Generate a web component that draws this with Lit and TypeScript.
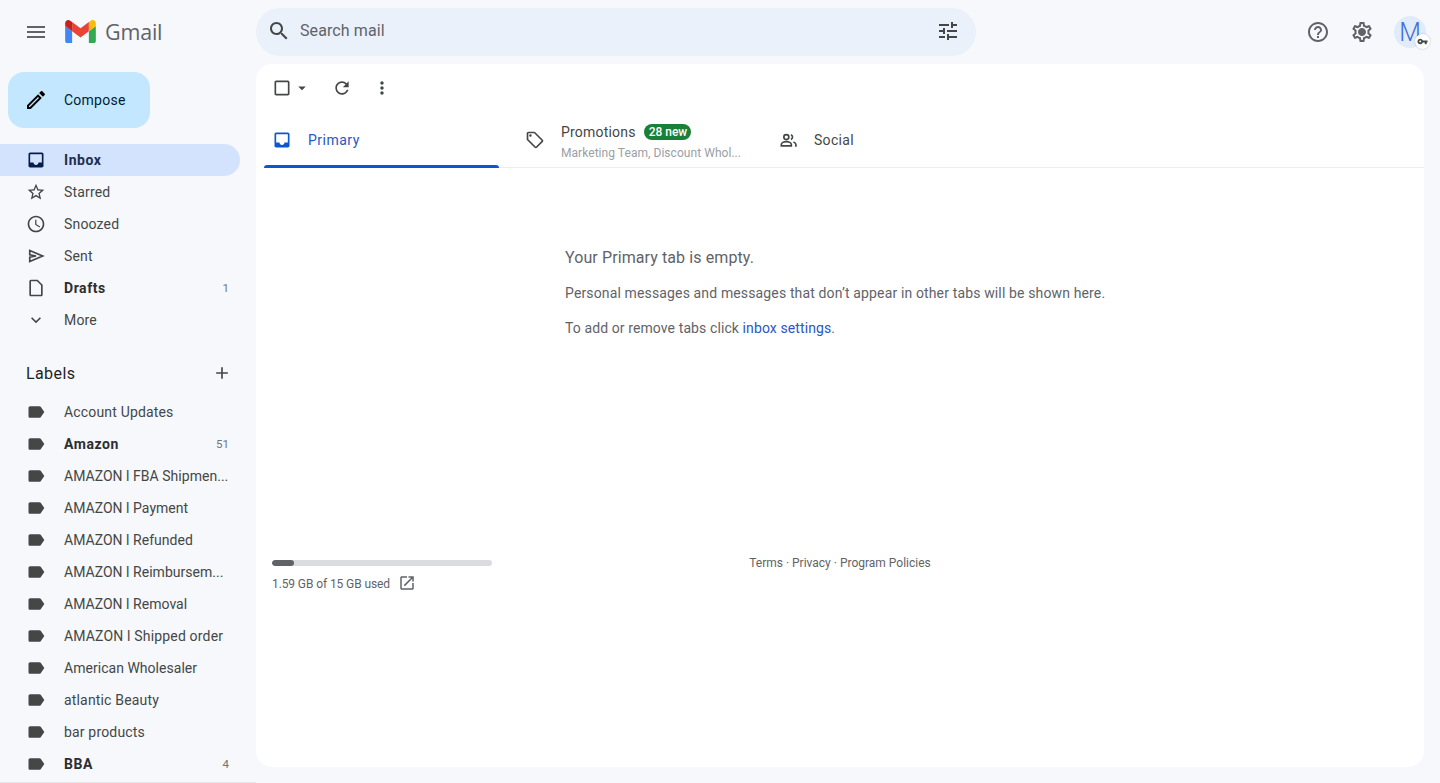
import { LitElement, html, css, svg } from "lit";
import { customElement } from "lit/decorators.js";

const P: Record<string, string> = {
  menu: "M3 18h18v-2H3v2zm0-5h18v-2H3v2zm0-7v2h18V6H3z",
  search: "M15.5 14h-.79l-.28-.27C15.41 12.59 16 11.11 16 9.5 16 5.91 13.09 3 9.5 3S3 5.91 3 9.5 5.91 16 9.5 16c1.61 0 3.09-.59 4.23-1.57l.27.28v.79l5 4.99L20.49 19l-4.99-5zm-6 0C7.01 14 5 11.99 5 9.5S7.01 5 9.5 5 14 7.01 14 9.5 11.99 14 9.5 14z",
  tune: "M3 17v2h6v-2H3zM3 5v2h10V5H3zm10 16v-2h8v-2h-8v-2h-2v6h2zM7 9v2H3v2h4v2h2V9H7zm14 4v-2H11v2h10zm-6-4h2V7h4V5h-4V3h-2v6z",
  help: "M11 18h2v-2h-2v2zm1-16C6.48 2 2 6.48 2 12s4.48 10 10 10 10-4.48 10-10S17.52 2 12 2zm0 18c-4.41 0-8-3.59-8-8s3.59-8 8-8 8 3.59 8 8-3.59 8-8 8zm0-14c-2.21 0-4 1.79-4 4h2c0-1.1.9-2 2-2s2 .9 2 2c0 2-3 1.75-3 5h2c0-2.25 3-2.5 3-5 0-2.21-1.79-4-4-4z",
  gear: "M19.43 12.98c.04-.32.07-.64.07-.98 0-.34-.03-.66-.07-.98l2.11-1.65c.19-.15.24-.42.12-.64l-2-3.46c-.09-.16-.26-.25-.44-.25-.06 0-.12.01-.17.03l-2.49 1c-.52-.4-1.08-.73-1.69-.98l-.38-2.65C14.46 2.18 14.25 2 14 2h-4c-.25 0-.46.18-.49.42l-.38 2.65c-.61.25-1.17.59-1.69.98l-2.49-1c-.06-.02-.12-.03-.18-.03-.17 0-.34.09-.43.25l-2 3.46c-.13.22-.07.49.12.64l2.11 1.65c-.04.32-.07.65-.07.98 0 .33.03.66.07.98l-2.11 1.65c-.19.15-.24.42-.12.64l2 3.46c.09.16.26.25.44.25.06 0 .12-.01.17-.03l2.49-1c.52.4 1.08.73 1.69.98l.38 2.65c.03.24.24.42.49.42h4c.25 0 .46-.18.49-.42l.38-2.65c.61-.25 1.17-.59 1.69-.98l2.49 1c.06.02.12.03.18.03.17 0 .34-.09.43-.25l2-3.46c.12-.22.07-.49-.12-.64l-2.11-1.65zm-1.98-1.71c.04.31.05.52.05.73 0 .21-.02.43-.05.73l-.14 1.13.89.7 1.08.84-.7 1.21-1.27-.51-1.04-.42-.9.68c-.43.32-.84.56-1.25.73l-1.06.43-.16 1.13-.2 1.35h-1.4l-.19-1.35-.16-1.13-1.06-.43c-.43-.18-.83-.41-1.23-.71l-.91-.7-1.06.43-1.27.51-.7-1.21 1.08-.84.89-.7-.14-1.13c-.03-.31-.05-.54-.05-.74s.02-.43.05-.73l.14-1.13-.89-.7-1.08-.84.7-1.21 1.27.51 1.04.42.9-.68c.43-.32.84-.56 1.25-.73l1.06-.43.16-1.13.2-1.35h1.39l.19 1.35.16 1.13 1.06.43c.43.18.83.41 1.23.71l.91.7 1.06-.43 1.27-.51.7 1.21-1.07.85-.89.7.14 1.13zM12 8c-2.21 0-4 1.79-4 4s1.79 4 4 4 4-1.79 4-4-1.79-4-4-4z",
  pencil: "M3 17.25V21h3.75L17.81 9.94l-3.75-3.75L3 17.25zM5.92 19H5v-.92l9.06-9.06.92.92L5.92 19zM20.71 5.63l-2.34-2.34c-.2-.2-.45-.29-.71-.29s-.51.1-.7.29l-1.83 1.83 3.75 3.75 1.83-1.83c.39-.39.39-1.02 0-1.41z",
  inbox: "M19 3H5c-1.1 0-2 .9-2 2v14c0 1.1.89 2 2 2h14c1.1 0 2-.9 2-2V5c0-1.1-.9-2-2-2zm0 12h-4c0 1.66-1.34 3-3 3s-3-1.34-3-3H5V5h14v10z",
  star: "M22 9.24l-7.19-.62L12 2 9.19 8.63 2 9.24l5.46 4.73L5.82 21 12 17.27 18.18 21l-1.63-7.03L22 9.24zM12 15.4l-3.76 2.27 1-4.28-3.32-2.88 4.38-.38L12 6.1l1.71 4.04 4.38.38-3.32 2.88 1 4.28L12 15.4z",
  clock: "M11.99 2C6.47 2 2 6.48 2 12s4.47 10 9.99 10C17.52 22 22 17.52 22 12S17.52 2 11.99 2zM12 20c-4.42 0-8-3.58-8-8s3.58-8 8-8 8 3.58 8 8-3.58 8-8 8zm.5-13H11v6l5.25 3.15.75-1.23-4.5-2.67z",
  file: "M6 2c-1.1 0-2 .9-2 2v16c0 1.1.9 2 2 2h12c1.1 0 2-.9 2-2V8l-6-6H6zm0 18V4h7.17L18 8.83V20H6z",
  chevron: "M16.59 8.59L12 13.17 7.41 8.59 6 10l6 6 6-6z",
  plus: "M19 13h-6v6h-2v-6H5v-2h6V5h2v6h6v2z",
  label: "M17.63 5.84C17.27 5.33 16.67 5 16 5L5 5.01C3.9 5.01 3 5.9 3 7v10c0 1.1.9 1.99 2 1.99L16 19c.67 0 1.27-.33 1.63-.84L22 12l-4.37-6.16z",
  refresh: "M17.65 6.35C16.2 4.9 14.21 4 12 4c-4.42 0-7.99 3.58-7.99 8s3.57 8 7.99 8c3.73 0 6.84-2.55 7.73-6h-2.08c-.82 2.33-3.04 4-5.65 4-3.31 0-6-2.69-6-6s2.69-6 6-6c1.66 0 3.14.69 4.22 1.78L13 11h7V4l-2.35 2.35z",
  dots: "M12 8c1.1 0 2-.9 2-2s-.9-2-2-2-2 .9-2 2 .9 2 2 2zm0 2c-1.1 0-2 .9-2 2s.9 2 2 2 2-.9 2-2-.9-2-2-2zm0 6c-1.1 0-2 .9-2 2s.9 2 2 2 2-.9 2-2-.9-2-2-2z",
  tag: "M21.41 11.58l-9-9C12.05 2.22 11.55 2 11 2H4c-1.1 0-2 .9-2 2v7c0 .55.22 1.05.59 1.42l9 9c.36.36.86.58 1.41.58.55 0 1.05-.22 1.41-.59l7-7c.37-.36.59-.86.59-1.41 0-.55-.23-1.06-.59-1.42zM13 20.01L4 11V4h7v-.01l9 9-7 7.02zM6.5 5A1.5 1.5 0 1 0 6.5 8 1.5 1.5 0 1 0 6.5 5z",
  open: "M19 19H5V5h7V3H5c-1.11 0-2 .9-2 2v14c0 1.1.89 2 2 2h14c1.1 0 2-.9 2-2v-7h-2v7zM14 3v2h3.59l-9.83 9.83 1.41 1.41L19 6.41V10h2V3h-7z",
  key: "M12.65 10C11.83 7.67 9.61 6 7 6c-3.31 0-6 2.69-6 6s2.69 6 6 6c2.61 0 4.83-1.67 5.65-4H17v4h4v-4h2v-4H12.65zM7 14c-1.1 0-2-.9-2-2s.9-2 2-2 2 .9 2 2-.9 2-2 2z",
  check: "M19 5v14H5V5h14m0-2H5c-1.1 0-2 .9-2 2v14c0 1.1.9 2 2 2h14c1.1 0 2-.9 2-2V5c0-1.1-.9-2-2-2z",
  caret: "M7 10l5 5 5-5z",
};

const ic = (name: string, cls = "i20") =>
  html`<svg class="ic ${cls}" viewBox="0 0 24 24" fill="currentColor">${svg`<path d=${P[name]}></path>`}</svg>`;

const sentIcon = () =>
  html`<svg class="ic i20" viewBox="0 0 24 24" fill="none" stroke="currentColor" stroke-width="2" stroke-linejoin="miter">
    ${svg`<path d="M4.5 5.5L20 12 4.5 18.5v-5L12 12 4.5 10.5z"></path>`}
  </svg>`;

const peopleIcon = () =>
  html`<svg class="ic i20" viewBox="0 0 24 24" fill="none" stroke="currentColor" stroke-width="2">
    ${svg`<circle cx="10" cy="8.5" r="3"></circle>
      <path d="M4 19v-1.5c0-2 3-3.5 6-3.5s6 1.5 6 3.5V19z"></path>
      <path d="M15.5 5.7a3 3 0 0 1 0 5.6"></path>
      <path d="M18.5 14.5c1.6.6 3 1.6 3 3V20"></path>`}
  </svg>`;

const NAV = [
  { icon: ic("inbox"), text: "Inbox", active: true, bold: true },
  { icon: ic("star"), text: "Starred" },
  { icon: ic("clock"), text: "Snoozed" },
  { icon: sentIcon(), text: "Sent" },
  { icon: ic("file"), text: "Drafts", bold: true, count: "1" },
  { icon: ic("chevron"), text: "More" },
];

const LABELS = [
  { text: "Account Updates" },
  { text: "Amazon", bold: true, count: "51" },
  { text: "AMAZON l FBA Shipmen...", tight: true },
  { text: "AMAZON l Payment", tight: true },
  { text: "AMAZON l Refunded", tight: true },
  { text: "AMAZON l Reimbursem...", tight: true },
  { text: "AMAZON l Removal", tight: true },
  { text: "AMAZON l Shipped order" },
  { text: "American Wholesaler", tight: true },
  { text: "atlantic Beauty" },
  { text: "bar products" },
  { text: "BBA", bold: true, count: "4" },
];

@customElement("app-root")
export class AppRoot extends LitElement {
  static styles = css`
    :host {
      display: flex;
      flex-direction: column;
      height: 783px;
      overflow: hidden;
      background: #f6f8fc;
      font-family: Roboto, "Liberation Sans", sans-serif;
      font-size: 14px;
      letter-spacing: 0.14px;
      color: #444746;
    }
    .ic { display: block; flex: none; }
    .i20 { width: 20px; height: 20px; }
    .i24 { width: 24px; height: 24px; }
    .i18 { width: 18px; height: 18px; }

    header { flex: none; height: 64px; display: flex; align-items: center; }
    .brand { flex: none; width: 256px; display: flex; align-items: center; }
    .menu { margin-left: 24px; color: #5f6368; }
    .logo { width: 31px; height: 23px; margin-left: 17px; margin-top: -1px; display: block; flex: none; }
    .word { margin-left: 9px; color: #5f6368; line-height: 24px; font-family: "Open Sans", Roboto, sans-serif; font-size: 21.5px; letter-spacing: -0.2px; }
    .search {
      width: 720px; height: 48px; border-radius: 24px; background: #eaf1fb;
      display: flex; align-items: center; padding: 0 16px 0 11px; box-sizing: border-box;
      color: #444746;
    }
    .search span { margin-left: 9px; flex: 1; font-size: 16px; letter-spacing: 0.1px; color: #5f6368; position: relative; top: -2px; }
    .search .ic { position: relative; top: -1px; }
    .tools { flex: 1; display: flex; align-items: center; justify-content: flex-end; padding-right: 14px; color: #5f6368; }
    .tools .gear { margin-left: 20px; }
    .avatar {
      position: relative; width: 32px; height: 32px; border-radius: 50%; margin-left: 20px;
      background: #e1ebfa; color: #3d6fd9; font-size: 25px; font-weight: 300; letter-spacing: 0; display: flex;
      align-items: center; justify-content: center;
    }
    .badge {
      position: absolute; right: -4px; bottom: -1px; width: 15px; height: 15px; border-radius: 50%;
      background: #fff; color: #444746; display: flex; align-items: center; justify-content: center;
      box-shadow: 0 0 2px rgba(0,0,0,.25);
    }
    .badge .ic { width: 11px; height: 11px; }

    .body { flex: 1; min-height: 0; display: flex; }
    aside { flex: none; width: 256px; }
    .compose {
      margin: 8px 0 16px 8px; width: 142px; height: 56px; border-radius: 16px; background: #c2e7ff;
      display: flex; align-items: center; padding-left: 16px; box-sizing: border-box; color: #001d35;
    }
    .compose span { margin-left: 16px; letter-spacing: 0.25px; }
    .compose .ic { color: #000; }
    .row {
      width: 240px; height: 32px; box-sizing: border-box; padding: 0 11px 0 26px;
      display: flex; align-items: center; border-radius: 0 16px 16px 0; color: #444746;
    }
    .row .name { margin-left: 18px; flex: 1; min-width: 0; white-space: nowrap; letter-spacing: 0.17px; }
    .row .name.tight { letter-spacing: 0.03px; }
    .row .count { font-size: 11.5px; letter-spacing: 0; margin-left: 8px; color: #70757a; }
    .row.bold .name { font-weight: 700; color: #2d2e30; letter-spacing: 0.55px; }
    .row.active { background: #d3e3fd; color: #041e49; }
    .row.active .name { color: #1c2f4f; }
    .labels-h {
      width: 240px; box-sizing: border-box; height: 60px; padding: 14px 8px 0 26px;
      display: flex; align-items: center; justify-content: space-between;
      font-size: 16px; color: #1f1f1f; letter-spacing: 0.4px;
    }
    .labels-h .ic { color: #444746; }
    .edge { margin-top: 2px; height: 1px; background: #e4e6ea; }

    main {
      flex: 1; min-width: 0; margin: 0 16px 16px 0; background: #fff; border-radius: 16px;
      display: flex; flex-direction: column; box-sizing: border-box;
    }
    .toolbar { flex: none; height: 48px; display: flex; align-items: center; padding-left: 16px; color: #444746; }
    .toolbar .caret { margin-left: 1px; width: 18px; height: 18px; }
    .toolbar .ref { margin-left: 21px; }
    .toolbar .dots { margin-left: 20px; }
    .tabs { flex: none; height: 56px; margin: 0 0 0 8px; display: flex; border-bottom: 1px solid #eceef0; box-sizing: border-box; }
    .tab { box-sizing: border-box; width: 253px; padding-left: 26px; display: flex; align-items: center; position: relative; color: #444746; }
    .tab.first { width: 235px; padding-left: 8px; color: #0b57d0; }
    .tab.first::after { content: ""; position: absolute; left: 0; right: 0; bottom: -1px; height: 3px; background: #0b57d0; border-radius: 3px 3px 0 0; }
    .tab .t { margin-left: 16px; letter-spacing: 0.3px; }
    .tab.first .t { margin-left: 16px; color: #2a56c6; letter-spacing: 0.5px; }
    .tab .stack { margin-left: 16px; display: flex; flex-direction: column; gap: 4px; position: relative; top: 2px; }
    .tab .line { display: flex; align-items: center; line-height: 18px; letter-spacing: 0.2px; }
    .tab .sub { font-size: 12px; letter-spacing: 0.05px; line-height: 16px; color: #9aa0a6; }
    .pill { margin-left: 8px; background: #188038; color: #fff; font-size: 12px; font-weight: 500; letter-spacing: 0; line-height: 16px; padding: 0 4px 0 5px; border-radius: 8px; }

    .empty { flex: none; margin-left: 309px; padding-top: 80px; height: 200px; box-sizing: border-box; color: #5f6368; }
    .empty .h { font-size: 16px; line-height: 19px; letter-spacing: 0.1px; }
    .empty p { margin: 18px 0 0; line-height: 17px; }
    .empty p.second { letter-spacing: 0.1px; }
    .empty a { color: #2a56c6; }

    .foot { flex: none; margin-top: 192px; display: grid; grid-template-columns: 1fr auto 1fr; padding: 0 16px; color: #5f6368; font-size: 12px; letter-spacing: -0.1px; }
    .bar { width: 220px; height: 6px; border-radius: 3px; background: #dadce0; overflow: hidden; }
    .bar i { display: block; height: 100%; border-radius: 3px; background: #5f6368; }
    .used { display: flex; align-items: center; margin-top: 9px; gap: 8px; }
    .used .ic { position: relative; top: -1px; }
    .terms { line-height: 14px; margin-top: -4px; letter-spacing: 0; }
  `;

  render() {
    return html`
      <header>
        <div class="brand">
          <span class="menu">${ic("menu", "i24")}</span>
          <svg class="logo" viewBox="52 42 88 66">
            <path fill="#4285f4" d="M58 108h14V74L52 59v43c0 3.32 2.69 6 6 6"></path>
            <path fill="#34a853" d="M120 108h14c3.32 0 6-2.69 6-6V59l-20 15"></path>
            <path fill="#fbbc04" d="M120 48v26l20-15v-8c0-7.42-8.47-11.65-14.4-7.2"></path>
            <path fill="#ea4335" d="M72 74V48l24 18 24-18v26L96 92"></path>
            <path fill="#c5221f" d="M52 51v8l20 15V48l-5.6-4.2c-5.94-4.45-14.4-.22-14.4 7.2"></path>
          </svg>
          <span class="word">Gmail</span>
        </div>
        <div class="search">
          ${ic("search", "i24")}
          <span>Search mail</span>
          ${ic("tune", "i24")}
        </div>
        <div class="tools">
          ${ic("help", "i24")}
          <span class="gear">${ic("gear", "i24")}</span>
          <div class="avatar">M<span class="badge">${ic("key")}</span></div>
        </div>
      </header>
      <div class="body">
        <aside>
          <div class="compose">${ic("pencil", "i24")}<span>Compose</span></div>
          ${NAV.map(
            (n) => html`<div class="row ${n.active ? "active" : ""} ${n.bold ? "bold" : ""}">
              ${n.icon}<span class="name">${n.text}</span>
              ${n.count ? html`<span class="count">${n.count}</span>` : ""}
            </div>`
          )}
          <div class="labels-h"><span>Labels</span>${ic("plus")}</div>
          ${LABELS.map(
            (l) => html`<div class="row ${l.bold ? "bold" : ""}">
              ${ic("label")}<span class="name ${l.tight ? "tight" : ""}">${l.text}</span>
              ${l.count ? html`<span class="count">${l.count}</span>` : ""}
            </div>`
          )}
          <div class="edge"></div>
        </aside>
        <main>
          <div class="toolbar">
            ${ic("check")}${ic("caret", "caret")}
            <span class="ref">${ic("refresh")}</span>
            <span class="dots">${ic("dots")}</span>
          </div>
          <div class="tabs">
            <div class="tab first">${ic("inbox")}<span class="t">Primary</span></div>
            <div class="tab">
              ${ic("tag")}
              <div class="stack">
                <div class="line">Promotions<span class="pill">28 new</span></div>
                <div class="sub">Marketing Team, Discount Whol...</div>
              </div>
            </div>
            <div class="tab">${peopleIcon()}<span class="t">Social</span></div>
          </div>
          <div class="empty">
            <div class="h">Your Primary tab is empty.</div>
            <p>Personal messages and messages that don’t appear in other tabs will be shown here.</p>
            <p class="second">To add or remove tabs click <a>inbox settings</a>.</p>
          </div>
          <div class="foot">
            <div>
              <div class="bar"><i style="width:10%"></i></div>
              <div class="used"><span>1.59 GB of 15 GB used</span>${ic("open", "i18")}</div>
            </div>
            <div class="terms">Terms · Privacy · Program Policies</div>
            <div></div>
          </div>
        </main>
      </div>
    `;
  }
}
